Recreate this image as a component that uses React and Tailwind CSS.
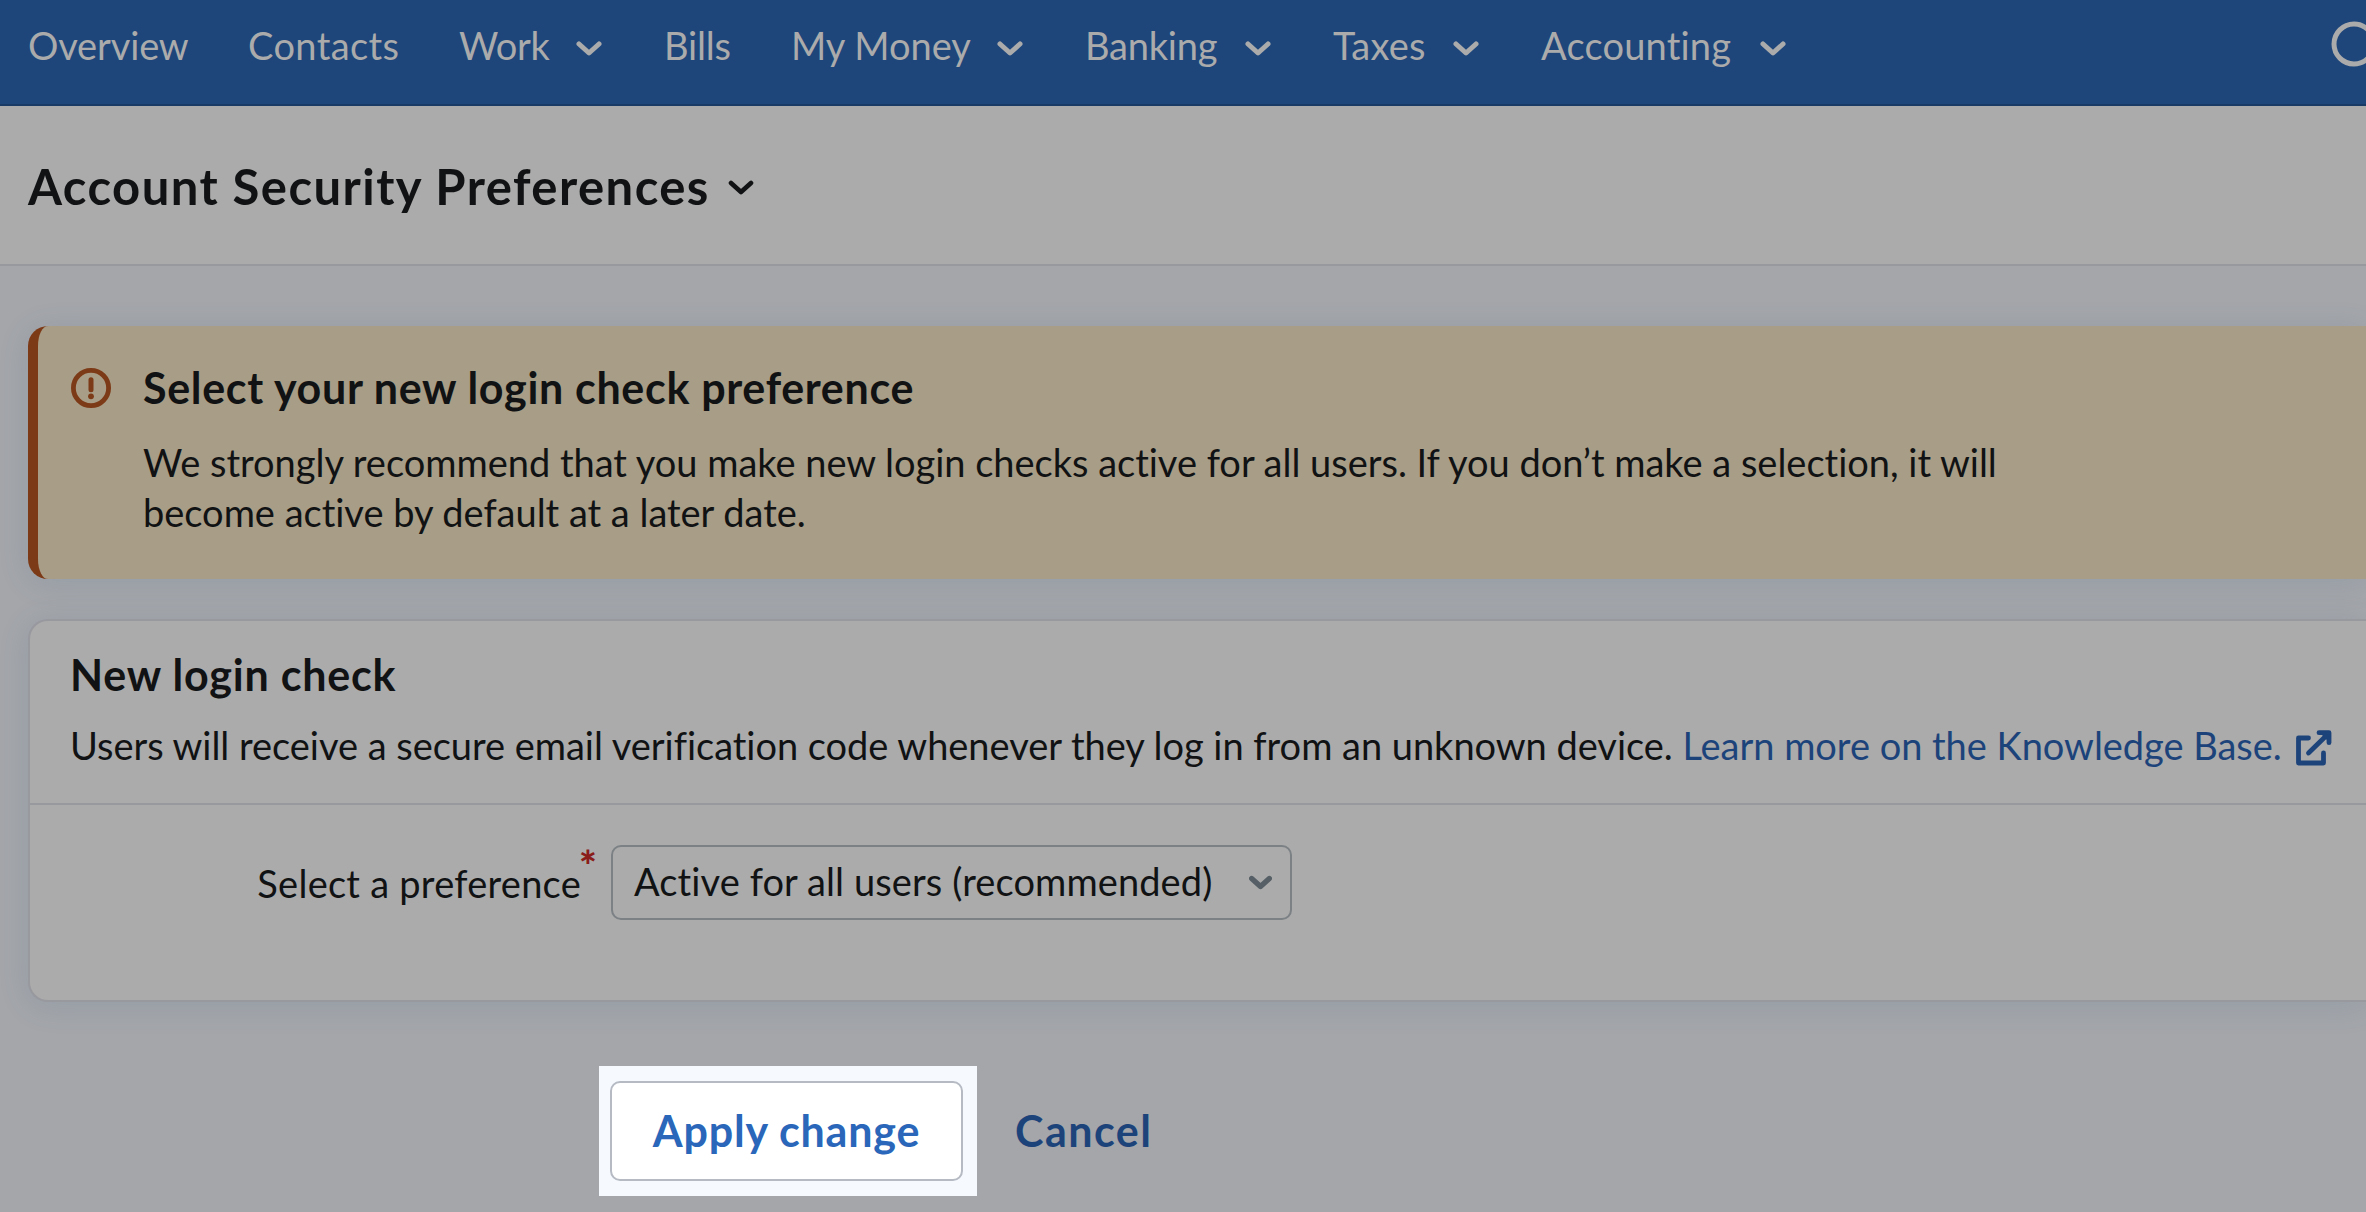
import React from 'react';

const navItems = [
  { label: 'Overview', width: 'w-[220px]', tracking: 'tracking-[-0.15px]' },
  { label: 'Contacts', width: 'w-[211px]', tracking: 'tracking-[0.4px]' },
  { label: 'Work', width: 'w-[205px]', tracking: 'tracking-[-0.4px]', menu: true },
  { label: 'Bills', width: 'w-[127px]', tracking: 'tracking-[-0.2px]' },
  { label: 'My Money', width: 'w-[294px]', menu: true },
  { label: 'Banking', width: 'w-[248px]', tracking: 'tracking-[-0.2px]', menu: true },
  { label: 'Taxes', width: 'w-[208px]', tracking: 'tracking-[0.2px]', menu: true },
  { label: 'Accounting', width: 'w-[307px]', tracking: 'tracking-[0.2px]', menu: true },
];

const Chevron = ({ className, strokeWidth = 5 }) => (
  <svg viewBox="0 0 26 15" fill="none" className={className}>
    <path d="M3 3l10 9L23 3" stroke="currentColor" strokeWidth={strokeWidth} strokeLinecap="round" strokeLinejoin="round" />
  </svg>
);

const WarningIcon = () => (
  <svg viewBox="0 0 40 40" fill="none" className="w-10 h-10 shrink-0 text-[#7d3a17]">
    <circle cx="20" cy="20" r="17.6" stroke="currentColor" strokeWidth="4.8" />
    <path d="M20 11.7v10" stroke="currentColor" strokeWidth="5" strokeLinecap="round" />
    <circle cx="20" cy="28.3" r="2.9" fill="currentColor" />
  </svg>
);

const ExternalIcon = () => (
  <svg viewBox="0 0 36 36" fill="none" className="w-9 h-9 shrink-0">
    <g stroke="currentColor" strokeWidth="4.8" strokeLinecap="round" strokeLinejoin="round">
      <path d="M12.5 8H2.5v25h25V23" />
      <path d="M12.5 23L31 5" />
      <path d="M23 2.7h10v10" />
    </g>
    <path d="M24 3h9v9z" fill="currentColor" />
  </svg>
);

const NavBar = () => (
  <nav className="h-[106px] bg-[#1e467b] border-b-2 border-[#1a3a66] flex items-start pl-7 pt-5 overflow-hidden text-[#ababab]">
    {navItems.map(({ label, width, tracking = '', menu }) => (
      <div key={label} className={`${width} shrink-0 flex items-center justify-between pr-[62px]`}>
        <span className={`whitespace-nowrap ${tracking}`}>{label}</span>
        {menu && <Chevron className="w-[26px] h-[15px] mt-[7px]" />}
      </div>
    ))}
    {/* search button, partly off the right edge */}
    <svg viewBox="0 0 46 46" fill="none" className="w-[46px] h-[46px] shrink-0 ml-auto -mr-[11px] mt-px">
      <circle cx="23" cy="23" r="20" stroke="currentColor" strokeWidth="5" />
    </svg>
  </nav>
);

export default function App() {
  return (
    <div className="w-full h-[1212px] overflow-hidden bg-[#a4a6aa] font-[Lato,sans-serif] text-[38px] leading-[50px] text-[#101213] [font-variant-ligatures:none]">
      <NavBar />

      <header className="h-40 bg-[#ababab] border-b-2 border-[#98989f] flex items-center gap-[18px] pl-7">
        <h1 className="pt-px text-[49px] leading-[60px] font-bold tracking-[1.45px] whitespace-nowrap">Account Security Preferences</h1>
        <Chevron className="w-[26px] h-[15px] mt-1" strokeWidth={4.6} />
      </header>

      <main className="pl-7 pt-[60px]">
        <section className="h-[253px] rounded-l-[20px] border-l-[10px] border-[#7d3a17] bg-[#a89d86] pl-[33px] pt-9 flex items-start gap-8 shadow-[0_4px_30px_rgba(70,110,140,0.16)]">
          <div className="pt-1.5">
            <WarningIcon />
          </div>
          <div className="w-[1880px]">
            <h2 className="pt-px text-[43px] font-bold tracking-[0.67px] mb-6">Select your new login check preference</h2>
            <p className="tracking-[-0.015px]">
              We strongly recommend that you make new login checks active for all users. If you don’t make a selection, it will
              become active by default at a later date.
            </p>
          </div>
        </section>

        <section className="mt-10 rounded-l-[20px] border-2 border-r-0 border-[#98989f] bg-[#ababab] shadow-[0_4px_30px_rgba(70,110,140,0.16)]">
          <div className="h-[184px] border-b-2 border-[#98989f] pl-10 pt-[29px]">
            <h2 className="text-[43px] font-bold tracking-[0.8px] mb-5">New login check</h2>
            <div className="flex items-start whitespace-nowrap">
              <p className="tracking-[-0.03px]">
                Users will receive a secure email verification code whenever they log in from an unknown device.{' '}
                <a className="text-[#1d437b]">Learn more on the Knowledge Base.</a>
              </p>
              <span className="ml-[14px] mt-[10px] text-[#1d437b]">
                <ExternalIcon />
              </span>
            </div>
          </div>

          <div className="h-[195px] pt-10 flex items-start">
            <label className="w-[551px] pt-[13px] text-right tracking-[0.25px] whitespace-nowrap">Select a preference</label>
            <span className="w-[30px] -mt-[5px] -ml-[2px] mr-[2px] text-[42px] font-black text-[#8a1c19]">*</span>
            <div className="w-[681px] h-[75px] rounded-[10px] border-2 border-[#7c8185] flex items-center justify-between pl-[21px] pr-[18px]">
              <span className="-mt-[3px] tracking-[0.1px] whitespace-nowrap">Active for all users (recommended)</span>
              <Chevron className="w-[23px] h-[15px] text-[#555f65]" strokeWidth={6} />
            </div>
          </div>
        </section>

        <div className="mt-16 ml-[571px] flex items-center text-[43px]">
          <div className="w-[378px] h-[130px] bg-[#f6faff] pl-[11px] pt-[15px]">
            <button className="w-[353px] h-[100px] rounded-[10px] border-2 border-[#b5bac3] bg-white font-bold tracking-[0.8px] text-[#2a66b9]">
              Apply change
            </button>
          </div>
          <a className="ml-[38px] font-bold tracking-[1.5px] text-[#1d437b]">Cancel</a>
        </div>
      </main>
    </div>
  );
}
